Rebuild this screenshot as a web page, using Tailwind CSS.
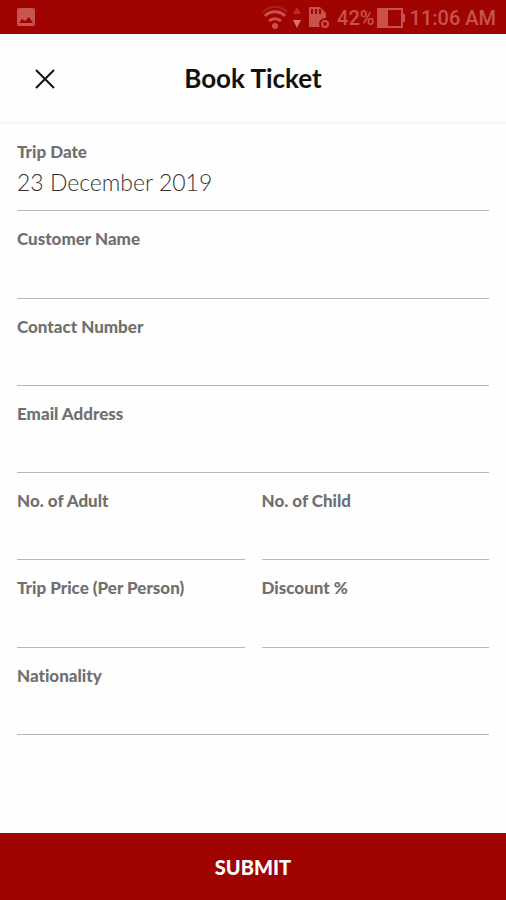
<!DOCTYPE html>
<html lang="en">
<head>
    <meta charset="UTF-8">
    <meta name="viewport" content="width=device-width, initial-scale=1.0">
    <title>Book Ticket</title>
    <script src="https://cdn.jsdelivr.net/npm/@tailwindcss/browser@4"></script>
</head>
<body class="flex min-h-screen flex-col bg-[#fefefe] font-['Lato',sans-serif]">

    <!-- Status bar -->
    <div class="flex h-[34px] items-center justify-between bg-[#a00400] pl-4 pr-[10px] pt-[2px] text-[#c9524f]">
        <svg class="h-5 w-5" viewBox="0 0 20 20" aria-hidden="true">
            <path fill="#c65450" fill-rule="evenodd" d="M3 0h14a2 2 0 0 1 2 2v14a2 2 0 0 1-2 2H3a2 2 0 0 1-2-2V2a2 2 0 0 1 2-2zM3 15h14l-4-6-4 4-3-2z"/>
        </svg>
        <div class="flex items-center font-['Roboto',sans-serif] text-xl font-medium leading-6">
            <svg class="h-6 w-7" viewBox="0 0 28 24" fill="none" stroke="currentColor" aria-hidden="true">
                <path stroke="#b01f1c" stroke-width="2" d="M2 6a17 17 0 0 1 24 0"/>
                <path stroke-width="3" d="M4 10a14 14 0 0 1 20 0M8 15a9 9 0 0 1 12 0"/>
                <circle cx="14" cy="20" r="3" fill="currentColor" stroke="none"/>
            </svg>
            <svg class="ml-[2px] h-6 w-3" viewBox="0 0 12 24" aria-hidden="true">
                <path fill="#b52e2b" d="M6 1l4 7H2z"/>
                <path fill="#d9716e" d="M2 14h8l-4 8z"/>
            </svg>
            <svg class="ml-1 h-6 w-6" viewBox="0 0 24 24" aria-hidden="true">
                <path fill="currentColor" d="M3 1h10l6 6v5a6 6 0 0 0-6 9H3a1 1 0 0 1-1-1V2a1 1 0 0 1 1-1z"/>
                <path stroke="#a00400" stroke-width="2" d="M5 3v5M9 3v5M13 3v5"/>
                <circle cx="18" cy="18" r="3" fill="none" stroke="currentColor" stroke-width="2"/>
            </svg>
            <span class="ml-[6px]">42%</span>
            <svg class="ml-[2px] h-5 w-7" viewBox="0 0 28 20" aria-hidden="true">
                <path fill="none" stroke="currentColor" stroke-width="2" d="M1 1h24v18H1z"/>
                <path fill="currentColor" d="M2 2h9v16H2zM26 6h2v8h-2z"/>
            </svg>
            <span class="ml-[5px]">11:06 AM</span>
        </div>
    </div>

    <!-- Header -->
    <header class="grid h-[90px] grid-cols-[1fr_auto_1fr] items-center border-b-2 border-[#f6f6f6] px-[33px]">
        <button type="button" aria-label="Close" class="h-6 w-6">
            <svg class="h-6 w-6" viewBox="0 0 24 24" stroke="#111" stroke-width="2" aria-hidden="true">
                <path d="M3 4l18 18M21 4L3 22"/>
            </svg>
        </button>
        <h1 class="text-[26px] font-bold leading-8 text-[#111]">Book Ticket</h1>
    </header>

    <!-- Booking form -->
    <main class="flex flex-1 flex-col px-[17px] pb-[98px]">
        <form id="bookingForm" class="grid flex-1 auto-rows-fr grid-cols-2 gap-x-[17px] text-[#707070] [font-variant-ligatures:none]">
            <div class="col-span-2 flex flex-col border-b border-[#b8b8b8] pt-4">
                <label for="tripDate" class="text-[17px] font-black leading-6">Trip Date</label>
                <input type="text" id="tripDate" value="23 December 2019" class="h-9 w-full text-[23px] font-light text-[#333] outline-none">
            </div>
            <div class="col-span-2 flex flex-col border-b border-[#b8b8b8] pt-4">
                <label for="customerName" class="text-[17px] font-black leading-6">Customer Name</label>
                <input type="text" id="customerName" class="h-9 w-full text-[23px] font-light text-[#333] outline-none">
            </div>
            <div class="col-span-2 flex flex-col border-b border-[#b8b8b8] pt-4">
                <label for="contactNumber" class="text-[17px] font-black leading-6">Contact Number</label>
                <input type="tel" id="contactNumber" class="h-9 w-full text-[23px] font-light text-[#333] outline-none">
            </div>
            <div class="col-span-2 flex flex-col border-b border-[#b8b8b8] pt-4">
                <label for="email" class="text-[17px] font-black leading-6">Email Address</label>
                <input type="email" id="email" class="h-9 w-full text-[23px] font-light text-[#333] outline-none">
            </div>
            <div class="flex flex-col border-b border-[#b8b8b8] pt-4">
                <label for="adults" class="text-[17px] font-black leading-6">No. of Adult</label>
                <input type="text" inputmode="numeric" id="adults" class="h-9 w-full text-[23px] font-light text-[#333] outline-none">
            </div>
            <div class="flex flex-col border-b border-[#b8b8b8] pt-4">
                <label for="children" class="text-[17px] font-black leading-6">No. of Child</label>
                <input type="text" inputmode="numeric" id="children" class="h-9 w-full text-[23px] font-light text-[#333] outline-none">
            </div>
            <div class="flex flex-col border-b border-[#b8b8b8] pt-4">
                <label for="tripPrice" class="text-[17px] font-black leading-6">Trip Price (Per Person)</label>
                <input type="text" inputmode="decimal" id="tripPrice" class="h-9 w-full text-[23px] font-light text-[#333] outline-none">
            </div>
            <div class="flex flex-col border-b border-[#b8b8b8] pt-4">
                <label for="discount" class="text-[17px] font-black leading-6">Discount %</label>
                <input type="text" inputmode="decimal" id="discount" class="h-9 w-full text-[23px] font-light text-[#333] outline-none">
            </div>
            <div class="col-span-2 flex flex-col border-b border-[#b8b8b8] pt-4">
                <label for="nationality" class="text-[17px] font-black leading-6">Nationality</label>
                <input type="text" id="nationality" class="h-9 w-full text-[23px] font-light text-[#333] outline-none">
            </div>
        </form>
    </main>

    <button type="submit" form="bookingForm" class="h-[67px] w-full bg-[#a00400] text-xl font-black text-white">SUBMIT</button>

</body>
</html>
